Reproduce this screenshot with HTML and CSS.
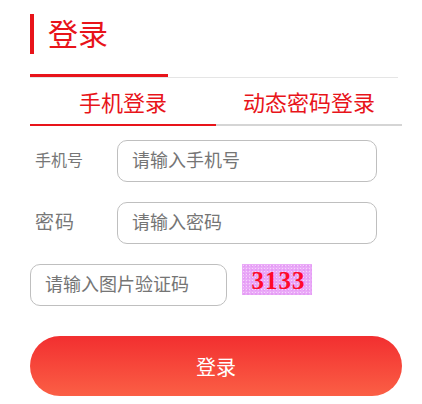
FILE: index.html
```html
<!DOCTYPE html>
<html>
<head>
    <title>登录</title>
    <link rel="stylesheet" href="styles.css">
</head>
<body>
    <div class="page">
        <h1 class="title">登录</h1>
        <div class="rule"><span class="rule-active"></span></div>
        <div class="tabs">
            <div class="tab active">手机登录</div>
            <div class="tab">动态密码登录</div>
        </div>
        <div class="row">
            <label class="label small">手机号</label>
            <input class="field" type="text" placeholder="请输入手机号">
        </div>
        <div class="row">
            <label class="label">密码</label>
            <input class="field" type="password" placeholder="请输入密码">
        </div>
        <div class="row captcha-row">
            <input class="field code" type="text" placeholder="请输入图片验证码">
            <div class="captcha">3133</div>
        </div>
        <button class="submit">登录</button>
    </div>
</body>
</html>
```

FILE: styles.css
```css
* {
    box-sizing: border-box;
}

body {
    margin: 0;
    background: #fff;
    font-family: "Liberation Sans", "Noto Sans CJK SC", sans-serif;
}

.page {
    padding: 14px 20px 0 30px;
}

.title {
    margin: 0;
    height: 40px;
    line-height: 42px;
    padding-left: 14px;
    border-left: 4px solid #e8141a;
    font-size: 30px;
    font-weight: normal;
    color: #e8141a;
}

.rule {
    width: 368px;
    height: 4px;
    margin-top: 20px;
    border-bottom: 1px solid #e5e5e5;
}

.rule-active {
    display: block;
    width: 138px;
    height: 3px;
    background: #e8141a;
}

.tabs {
    display: flex;
    height: 48px;
}

.tab {
    width: 186px;
    height: 48px;
    line-height: 52px;
    text-align: center;
    font-size: 22px;
    color: #e8141a;
    border-bottom: 2px solid #d5d5d5;
}

.tab.active {
    border-bottom-color: #e8141a;
}

.row {
    display: flex;
    align-items: flex-start;
    margin-top: 20px;
}

.tabs + .row {
    margin-top: 14px;
}

.label {
    width: 87px;
    padding-left: 5px;
    line-height: 42px;
    font-size: 19px;
    letter-spacing: 1px;
    color: #777;
}

.label.small {
    font-size: 16px;
    letter-spacing: 0;
}

.field {
    width: 260px;
    height: 42px;
    padding: 0 14px;
    border: 1px solid #bfbfbf;
    border-radius: 10px;
    outline: none;
    background: #fff;
    font-family: inherit;
    font-size: 18px;
}

.field::placeholder {
    color: #757575;
    opacity: 1;
}

.field.code {
    width: 197px;
}

.captcha {
    width: 70px;
    height: 31px;
    margin-left: 15px;
    padding-left: 3px;
    line-height: 33px;
    text-align: center;
    font-family: "Liberation Serif", serif;
    font-size: 25px;
    font-weight: bold;
    letter-spacing: 1px;
    color: #ff0a2c;
    background-color: #eaaaf8;
    background-image: radial-gradient(#f7d4fb 0.6px, transparent 0.8px), radial-gradient(#dc8cf0 0.6px, transparent 0.8px);
    background-size: 3px 3px, 4px 4px;
}

.submit {
    display: block;
    width: 372px;
    height: 60px;
    margin-top: 30px;
    border: none;
    border-radius: 30px;
    background: linear-gradient(#f22f30, #fb5f45);
    color: #fff;
    font-family: inherit;
    font-size: 20px;
}
```
